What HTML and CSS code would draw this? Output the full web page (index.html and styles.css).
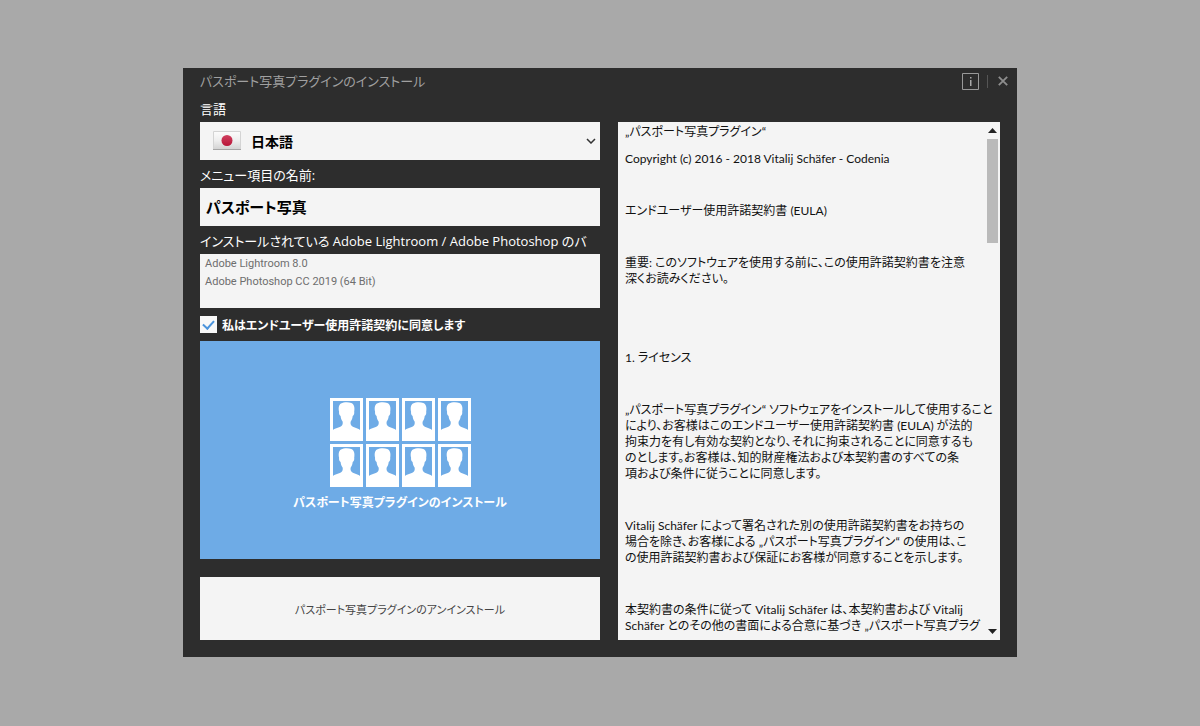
FILE: index.html
```html
<!DOCTYPE html>
<html lang="ja">
<head>
<meta charset="utf-8">
<meta name="viewport" content="width=device-width, initial-scale=1">
<title>パスポート写真プラグインのインストール</title>
<link rel="stylesheet" href="styles.css">
</head>
<body>
<svg class="defs" aria-hidden="true">
  <symbol id="photo" viewBox="0 0 33 43">
    <path fill="#fff" d="M0 0h33v43H0z"/>
    <path fill="#6eabe6" d="M3 3h27v30H3z"/>
    <path fill="#fff" d="M2.500 33.500L3 32c2-2.200 7.500-2 9.300-5 .6-1.300.5-2.500.3-3.500-1.200-1.400-1.800-3.300-2-5.500-1.300-.6-1.800-2.700-1.500-4.200C8.300 10.500 8.600 7 11 5.600c2.700-1.700 7.500-1.900 10.300-.5 2.900 1.300 3.600 4.500 2.900 8.700.3 1.500-.2 3.600-1.500 4.200-.2 2.200-.8 4.100-2 5.500-.2 1-.3 2.200.3 3.500 1.800 3 7 2.800 9 5l.5 1.500z"/>
  </symbol>
</svg>
<main class="window">
  <header class="titlebar">
    <h1 class="title">パスポート写真プラグインのインストール</h1>
    <div class="window-tools">
      <button class="tool" type="button" aria-label="情報">
        <svg width="17" height="17" viewBox="0 0 17 17"><path fill="none" stroke="#999" d="M.5.5h16v16H.5z"/><path fill="#a8a8a8" d="M8 4h1.500v1.500H8zM8 7h1.500v6H8z"/></svg>
      </button>
      <span class="divider"></span>
      <button class="tool" type="button" aria-label="閉じる">
        <svg width="10" height="10" viewBox="0 0 10 10"><path stroke="#8e8e8e" stroke-width="1.800" d="M.8.8l8.400 8.400M9.200.8L.8 9.200"/></svg>
      </button>
    </div>
  </header>
  <div class="columns">
    <form class="settings">
      <label class="label" for="language">言語</label>
      <div class="language">
        <select class="field language-select" id="language"><option>日本語</option></select>
        <svg class="flag" width="28" height="20" viewBox="0 0 28 20" aria-hidden="true">
          <defs><linearGradient id="cloth" x2="0" y2="1"><stop offset="0" stop-color="#fcfcfc"/><stop offset=".5" stop-color="#eee"/><stop offset="1" stop-color="#d2d2d2"/></linearGradient>
          <linearGradient id="sun" x2="0" y2="1"><stop offset="0" stop-color="#d0405f"/><stop offset="1" stop-color="#b81538"/></linearGradient></defs>
          <path fill="url(#cloth)" stroke="#d4d4d4" d="M.5.5h27v18H.5z"/><path stroke="#a5a5a5" d="M0 18.500h28"/><circle cx="14" cy="9.500" r="5.500" fill="url(#sun)"/>
        </svg>
        <svg class="chevron" width="10" height="6" viewBox="0 0 10 6" aria-hidden="true"><path fill="none" stroke="#333" stroke-width="1.500" d="M1 1l4 4 4-4"/></svg>
      </div>
      <label class="label" for="menu-name">メニュー項目の名前:</label>
      <input class="field menu-name" id="menu-name" type="text" value="パスポート写真">
      <h2 class="label" id="installed">インストールされている Adobe Lightroom / Adobe Photoshop のバ</h2>
      <ul class="installed" aria-labelledby="installed">
        <li>Adobe Lightroom 8.0</li>
        <li>Adobe Photoshop CC 2019 (64 Bit)</li>
      </ul>
      <label class="agree"><input class="check" type="checkbox" checked>私はエンドユーザー使用許諾契約に同意します</label>
      <button class="install" type="button">
        <span class="photos" aria-hidden="true">
          <svg class="photo"><use href="#photo"/></svg><svg class="photo"><use href="#photo"/></svg><svg class="photo"><use href="#photo"/></svg><svg class="photo"><use href="#photo"/></svg>
          <svg class="photo"><use href="#photo"/></svg><svg class="photo"><use href="#photo"/></svg><svg class="photo"><use href="#photo"/></svg><svg class="photo"><use href="#photo"/></svg>
        </span>
        <span>パスポート写真プラグインのインストール</span>
      </button>
      <button class="uninstall" type="button">パスポート写真プラグインのアンインストール</button>
    </form>
    <section class="license" aria-label="エンドユーザー使用許諾契約書">
      <div class="license-text">
        <p>„パスポート写真プラグイン“</p>
        <p>Copyright (c) 2016 - 2018 Vitalij Schäfer - Codenia</p>
        <p class="spaced">エンドユーザー使用許諾契約書 (EULA)</p>
        <p class="spaced">重要: このソフトウェアを使用する前に、この使用許諾契約書を注意<br>深くお読みください。</p>
        <p class="chapter">1. ライセンス</p>
        <p class="spaced">„パスポート写真プラグイン“ ソフトウェアをインストールして使用すること<br>により、お客様はこのエンドユーザー使用許諾契約書 (EULA) が法的<br>拘束力を有し有効な契約となり、それに拘束されることに同意するも<br>のとします。お客様は、知的財産権法および本契約書のすべての条<br>項および条件に従うことに同意します。</p>
        <p class="spaced">Vitalij Schäfer によって署名された別の使用許諾契約書をお持ちの<br>場合を除き、お客様による „パスポート写真プラグイン“ の使用は、こ<br>の使用許諾契約書および保証にお客様が同意することを示します。</p>
        <p class="spaced">本契約書の条件に従って Vitalij Schäfer は、本契約書および Vitalij<br>Schäfer とのその他の書面による合意に基づき „パスポート写真プラグ</p>
      </div>
      <div class="scrollbar" aria-hidden="true">
        <svg width="9" height="5" viewBox="0 0 9 5"><path fill="#222" d="M0 5L4.500 0 9 5z"/></svg>
        <div class="track"><div class="thumb"></div></div>
        <svg width="9" height="5" viewBox="0 0 9 5"><path fill="#222" d="M0 0h9L4.500 5z"/></svg>
      </div>
    </section>
  </div>
</main>
</body>
</html>
```
FILE: styles.css
```css
* {
  box-sizing: border-box;
}

body {
  margin: 0;
  min-height: 100vh;
  padding: 68px 16px;
  background: #a9a9a9;
  font-family: "Open Sans", "Noto Sans CJK JP", sans-serif;
  font-feature-settings: "palt";
}

button,
input,
select {
  font: inherit;
  font-feature-settings: inherit;
  border: 0;
  border-radius: 0;
  margin: 0;
}

.defs {
  position: absolute;
  width: 0;
  height: 0;
}

.window {
  max-width: 834px;
  margin: 0 auto;
  padding: 0 17px 17px;
  background: #2d2d2d;
  color: #fff;
}

.titlebar {
  display: flex;
  align-items: center;
  justify-content: space-between;
  height: 26px;
}

.title {
  margin: 0;
  font-size: 13px;
  line-height: 24px;
  font-weight: 400;
  color: #a0a0a0;
}

.window-tools {
  display: flex;
  align-items: center;
  gap: 8px;
  margin-right: -8px;
}

.tool {
  display: flex;
  padding: 0;
  background: none;
}

.divider {
  width: 1px;
  height: 13px;
  margin-right: 2px;
  background: #555;
}

.columns {
  display: grid;
  grid-template-columns: 400fr 382fr;
  gap: 18px;
}

.settings {
  display: flex;
  flex-direction: column;
  min-width: 0;
}

.label {
  height: 28px;
  margin: 0;
  padding-top: 2px;
  font-size: 13px;
  line-height: 26px;
  font-weight: 400;
  white-space: nowrap;
}

.field {
  width: 100%;
  height: 38px;
  background: #f4f4f4;
  color: #000;
  font-weight: 600;
}

.language {
  display: grid;
  align-items: center;
}

.language > * {
  grid-area: 1 / 1;
}

.language-select {
  appearance: none;
  padding: 0 24px 0 51px;
  font-size: 14px;
}

.flag {
  margin-left: 13px;
  pointer-events: none;
}

.chevron {
  justify-self: end;
  margin-right: 4px;
  pointer-events: none;
}

.menu-name {
  padding: 0 6px 2px;
  font-size: 15px;
}

.installed {
  height: 54px;
  margin: 0;
  padding: 1px 5px;
  list-style: none;
  background: #f4f4f4;
  color: #6e6e6e;
  font-family: Roboto, sans-serif;
  font-size: 11px;
  line-height: 18px;
}

.agree {
  display: flex;
  align-items: center;
  gap: 5px;
  height: 33px;
  font-size: 12px;
  font-weight: 600;
}

.check {
  appearance: none;
  display: grid;
  place-items: center;
  width: 17px;
  height: 17px;
  background: #f8f8f8;
}

.check:checked::before {
  content: "";
  width: 5px;
  height: 9px;
  margin-bottom: 3px;
  border: solid #4b94dc;
  border-width: 0 2px 2px 0;
  transform: rotate(42deg);
}

.install {
  display: flex;
  flex-direction: column;
  align-items: center;
  gap: 4px;
  height: 218px;
  padding-top: 57px;
  background: #6eabe6;
  color: #fff;
  font-size: 12px;
  line-height: 24px;
  font-weight: 600;
}

.photos {
  display: grid;
  grid-template-columns: repeat(4, 33px);
  gap: 3px;
}

.photo {
  width: 33px;
  height: 43px;
}

.uninstall {
  height: 63px;
  margin-top: 18px;
  background: #f4f4f4;
  color: #444;
  font-size: 11px;
}

.license {
  display: flex;
  justify-content: space-between;
  min-width: 0;
  margin-top: 28px;
  background: #f4f4f4;
  color: #111;
}

.license-text {
  min-width: 0;
  padding: 2px 0 0 7px;
  white-space: nowrap;
  font-family: Lato, "Noto Sans CJK JP", sans-serif;
  font-size: 12px;
  line-height: 16px;
}

.license-text p {
  margin: 0 0 11px;
}

.license-text .spaced {
  margin-top: 36px;
}

.license-text .chapter {
  margin-top: 63px;
}

.license-text p:last-child {
  margin-bottom: 0;
}

.scrollbar {
  display: flex;
  flex-direction: column;
  align-items: center;
  width: 11px;
  margin-right: 2px;
  padding: 6px 0;
}

.track {
  flex: 1;
  width: 100%;
  padding: 6px 0;
}

.thumb {
  height: 104px;
  background: #bababa;
}
```
